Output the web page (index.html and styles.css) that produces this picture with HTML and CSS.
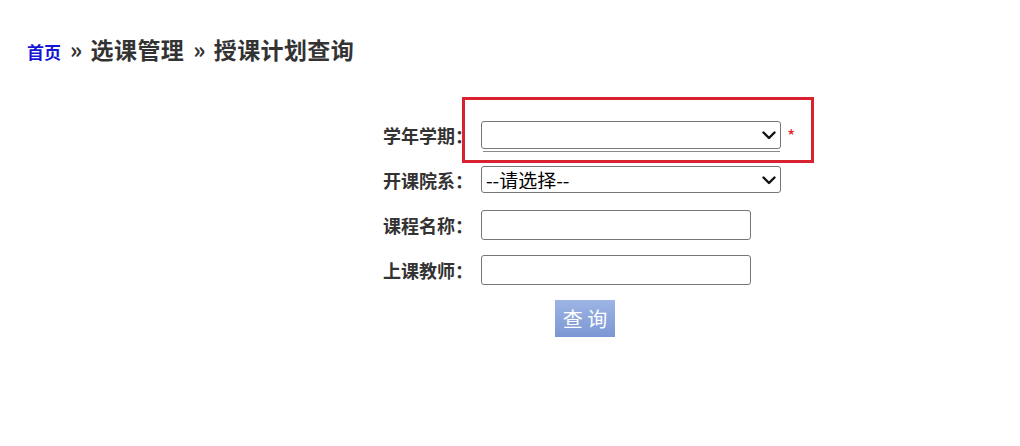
FILE: index.html
```html
<!DOCTYPE html>
<html lang="zh-CN">
<head>
<meta charset="utf-8">
<title>授课计划查询</title>
<link rel="stylesheet" href="styles.css">
</head>
<body>
<div class="crumb"><a href="#" class="home">首页</a><span class="sep">»</span>选课管理<span class="sep">»</span>授课计划查询</div>
<form class="form">
  <div class="row">
    <label class="lbl">学年学期：</label>
    <div class="ctl">
      <div class="selwrap">
        <select class="sel"><option></option></select>
        <svg class="chev" width="14" height="9" viewBox="0 0 14 9"><path d="M1.5 1.5 L7 7 L12.5 1.5" fill="none" stroke="#111" stroke-width="2.4" stroke-linecap="round" stroke-linejoin="round"/></svg>
        <div class="underline"></div>
      </div>
      <span class="req">*</span>
    </div>
  </div>
  <div class="row">
    <label class="lbl">开课院系：</label>
    <div class="ctl">
      <div class="selwrap">
        <select class="sel sel2"><option>--请选择--</option></select>
        <svg class="chev" width="14" height="9" viewBox="0 0 14 9"><path d="M1.5 1.5 L7 7 L12.5 1.5" fill="none" stroke="#111" stroke-width="2.4" stroke-linecap="round" stroke-linejoin="round"/></svg>
      </div>
    </div>
  </div>
  <div class="row">
    <label class="lbl">课程名称：</label>
    <div class="ctl"><input class="txt" type="text"></div>
  </div>
  <div class="row">
    <label class="lbl">上课教师：</label>
    <div class="ctl"><input class="txt" type="text"></div>
  </div>
  <div class="btnrow"><button type="button" class="btn">查 询</button></div>
  <div class="mark"></div>
</form>
</body>
</html>
```
FILE: styles.css
```css
html, body { margin: 0; padding: 0; background: #fff; }
body { font-family: "Noto Sans CJK SC", "Microsoft YaHei", sans-serif; color: #333; }
.crumb { padding: 33px 0 0 27px; font-size: 23px; font-weight: bold; line-height: 32px; color: #333; letter-spacing: 0.4px; }
.crumb .home { color: #1515d6; text-decoration: none; font-size: 17px; letter-spacing: 0; }
.crumb .sep { margin: 0 8px 0 9px; }
.form { position: relative; margin: 44px 0 0 383px; width: 440px; }
.row { display: flex; align-items: center; height: 45px; }
.lbl { width: 98px; font-size: 18px; font-weight: bold; color: #333; white-space: nowrap; }
.ctl { display: flex; align-items: center; }
.selwrap { position: relative; }
.sel { display: block; width: 300px; height: 28px; font-family: inherit; font-size: 19px; line-height: 1; color: #000; border: 1px solid #767676; border-radius: 3px; background: #fff; padding: 0 24px 0 4px; appearance: none; -webkit-appearance: none; }
.sel2 { height: 27px; }
.chev { position: absolute; right: 5px; top: 50%; margin-top: -4px; pointer-events: none; }
.underline { position: absolute; left: 2px; right: 1px; bottom: -3px; height: 1px; background: #8a8a8a; }
.req { color: #e0262e; font-size: 18px; margin-left: 6px; line-height: 1; }
.txt { box-sizing: border-box; width: 270px; height: 30px; border: 1px solid #767676; border-radius: 3px; font-size: 15px; padding: 0 4px; }
.btnrow { padding: 8px 0 0 172px; }
.btn { width: 60px; height: 37px; border: none; background: linear-gradient(#9db4e4, #7b97d3); color: #fff; font-family: inherit; font-size: 20px; padding: 0; }
.mark { position: absolute; left: 79px; top: -15px; width: 346px; height: 60px; border: 3px solid #d8232f; }
```
